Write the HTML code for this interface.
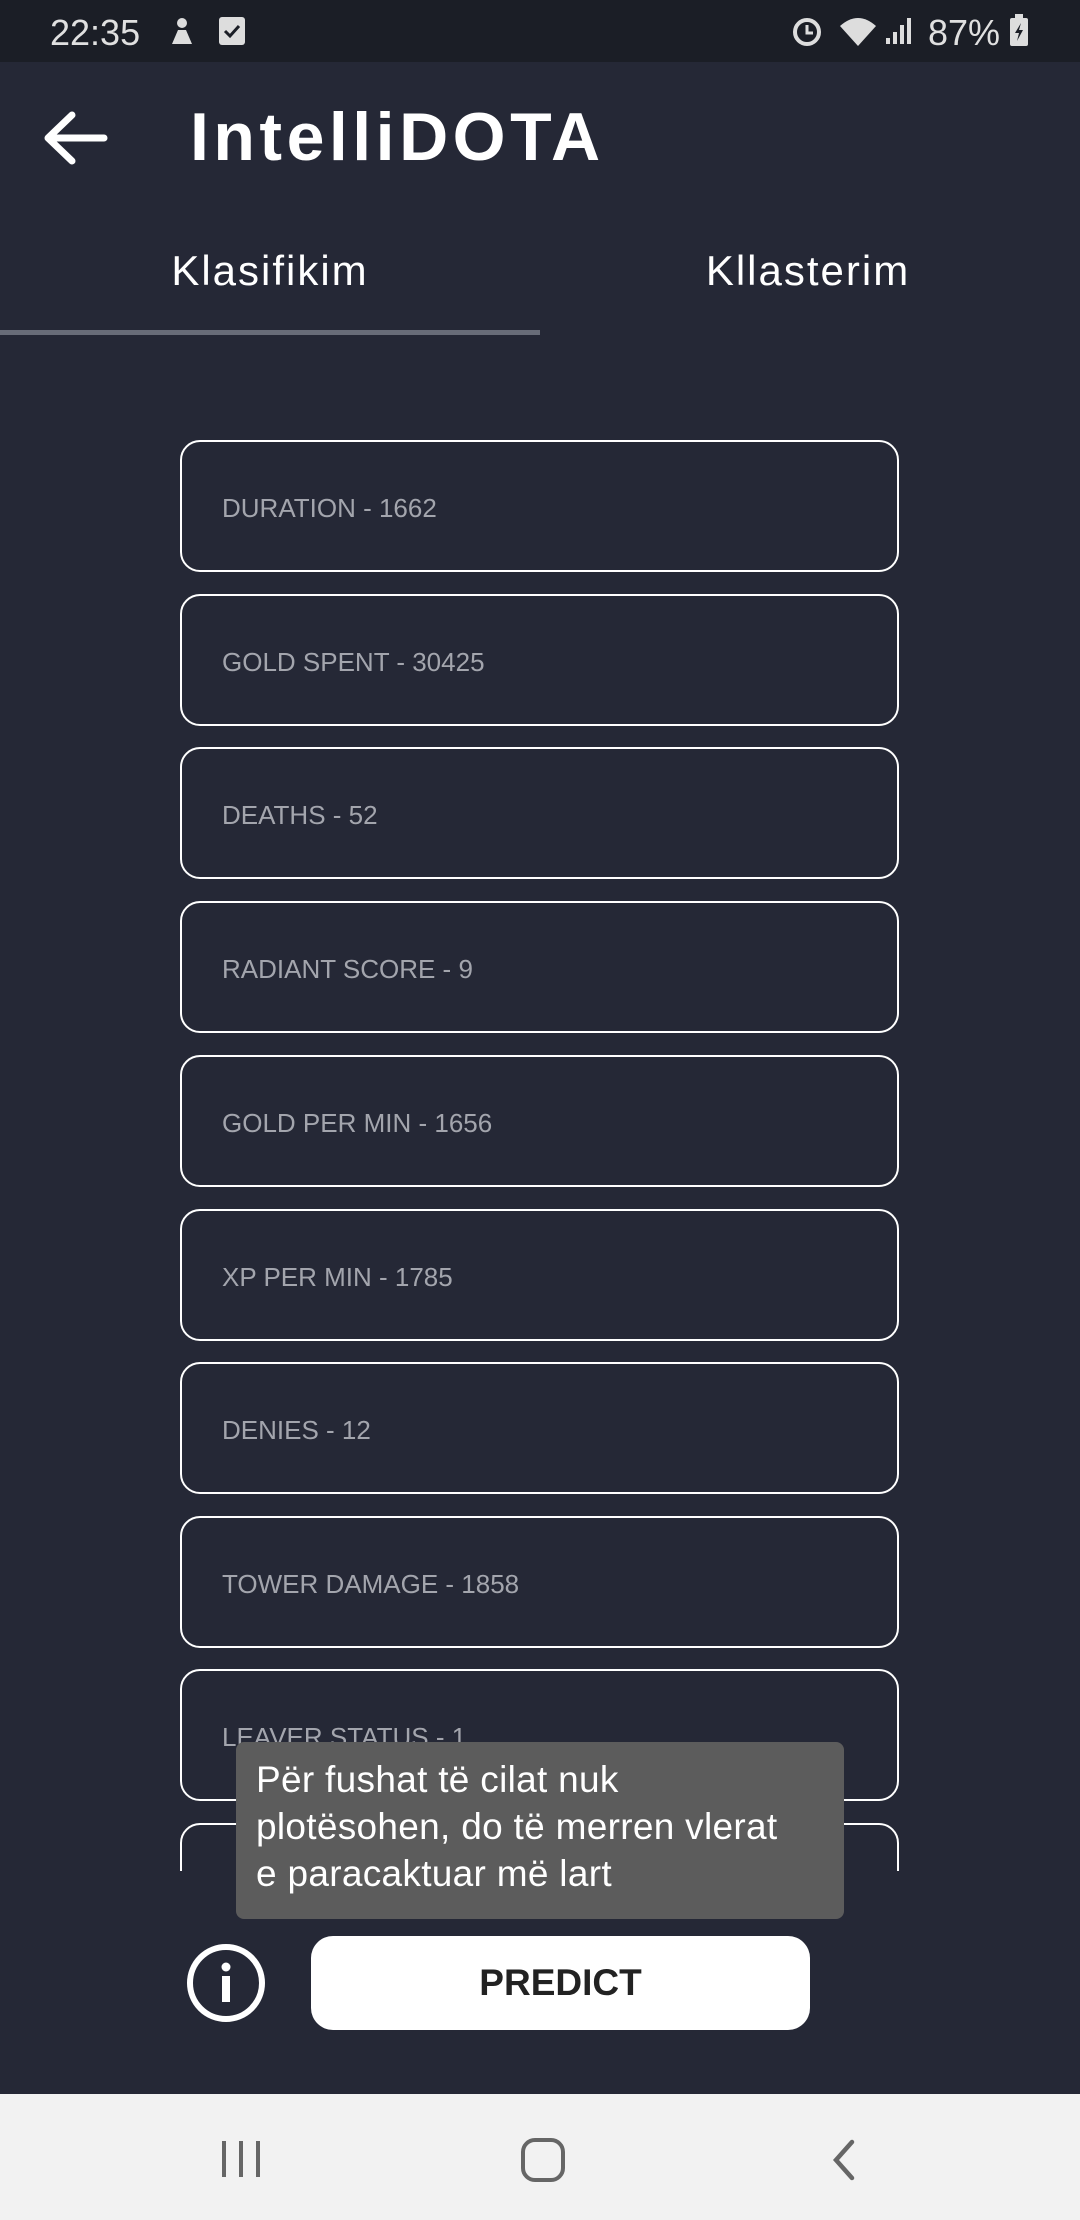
<!DOCTYPE html>
<html><head><meta charset="utf-8"><style>
*{margin:0;padding:0;box-sizing:border-box}
body{width:1080px;height:2220px;background:#252836;font-family:"Liberation Sans",sans-serif;position:relative;overflow:hidden}
.sb{position:absolute;left:0;top:0;width:1080px;height:62px;background:#1b1e26;color:#e0e0e0;font-size:36px}
.field{position:absolute;left:180px;width:719px;height:132px;border:2.5px solid #fff;border-radius:20px;color:#a3a5ad;font-size:26px;padding-left:40px;line-height:133px}
.clip{position:absolute;left:0;top:420px;width:1080px;height:1451px;overflow:hidden}
</style></head><body>
<div class="sb">
<span style="position:absolute;left:50px;top:12px">22:35</span>
<svg style="position:absolute;left:166px;top:16px" width="30" height="32" viewBox="0 0 30 32"><circle cx="16" cy="7" r="5" fill="#ddd"/><path d="M6 28 L12 14 L20 14 L26 28 Z" fill="#ddd"/></svg>
<svg style="position:absolute;left:218px;top:16px" width="28" height="30"><rect x="1" y="1" width="26" height="28" rx="3" fill="#ddd"/><path d="M7 15 L12 20 L21 10" stroke="#1b1e26" stroke-width="3" fill="none"/></svg>
<svg style="position:absolute;left:790px;top:14px" width="34" height="34"><circle cx="17" cy="18" r="12" fill="none" stroke="#ddd" stroke-width="4"/><path d="M17 11v8h6" stroke="#ddd" stroke-width="3" fill="none"/></svg>
<svg style="position:absolute;left:838px;top:14px" width="40" height="34"><path d="M2 12 Q20 -4 38 12 L20 32 Z" fill="#ddd"/></svg>
<svg style="position:absolute;left:884px;top:16px" width="30" height="30"><rect x="2" y="22" width="4" height="6" fill="#ddd"/><rect x="9" y="16" width="4" height="12" fill="#ddd"/><rect x="16" y="9" width="4" height="19" fill="#ddd"/><rect x="23" y="2" width="4" height="26" fill="#ddd"/></svg>
<span style="position:absolute;left:928px;top:12px">87%</span>
<svg style="position:absolute;left:1008px;top:14px" width="22" height="34"><rect x="2" y="4" width="18" height="28" rx="2" fill="#ddd"/><rect x="7" y="0" width="8" height="4" fill="#ddd"/><path d="M13 9 L7 19 L11 19 L9 27 L15 16 L11 16 Z" fill="#1b1e26"/></svg>
</div>
<svg style="position:absolute;left:42px;top:110px" width="66" height="56" viewBox="0 0 66 56"><path d="M62 28 H8 M30 5 L6 28 L30 51" stroke="#fff" stroke-width="7" fill="none" stroke-linecap="round" stroke-linejoin="round"/></svg>
<div style="position:absolute;left:190px;top:98px;font-size:68px;font-weight:bold;color:#fff;letter-spacing:4.5px">IntelliDOTA</div>
<div style="position:absolute;left:0;top:247px;width:540px;text-align:center;font-size:42px;color:#fff;letter-spacing:2px">Klasifikim</div>
<div style="position:absolute;left:540px;top:247px;width:536px;text-align:center;font-size:42px;color:#fff;letter-spacing:2px">Kllasterim</div>
<div style="position:absolute;left:0;top:330px;width:540px;height:5px;background:#686c78"></div>
<div class="clip">
<div class="field" style="top:20px">DURATION - 1662</div>
<div class="field" style="top:174px">GOLD SPENT - 30425</div>
<div class="field" style="top:327px">DEATHS - 52</div>
<div class="field" style="top:481px">RADIANT SCORE - 9</div>
<div class="field" style="top:635px">GOLD PER MIN - 1656</div>
<div class="field" style="top:789px">XP PER MIN - 1785</div>
<div class="field" style="top:942px">DENIES - 12</div>
<div class="field" style="top:1096px">TOWER DAMAGE - 1858</div>
<div class="field" style="top:1249px">LEAVER STATUS - 1</div>
<div class="field" style="top:1403px"></div>
</div>
<div style="position:absolute;left:236px;top:1742px;width:608px;height:177px;background:#5c5c5c;border-radius:8px;color:#fff;font-size:37px;line-height:47px;padding:14px 20px;white-space:nowrap;letter-spacing:0.3px">Për fushat të cilat nuk<br>plotësohen, do të merren vlerat<br>e paracaktuar më lart</div>
<svg style="position:absolute;left:186px;top:1943px" width="80" height="80"><circle cx="40" cy="40" r="36" fill="none" stroke="#fff" stroke-width="6"/><circle cx="40" cy="24" r="4.5" fill="#fff"/><rect x="36" y="33" width="8" height="26" fill="#fff"/></svg>
<div style="position:absolute;left:311px;top:1936px;width:499px;height:94px;background:#fff;border-radius:22px;text-align:center;line-height:94px;font-size:37px;color:#222;font-weight:bold">PREDICT</div>
<div style="position:absolute;left:0;top:2094px;width:1080px;height:126px;background:#f2f2f2"></div>
<svg style="position:absolute;left:218px;top:2139px" width="48" height="40"><rect x="4" y="2" width="4" height="36" fill="#666"/><rect x="21" y="2" width="4" height="36" fill="#666"/><rect x="38" y="2" width="4" height="36" fill="#666"/></svg>
<svg style="position:absolute;left:520px;top:2137px" width="46" height="46"><rect x="3" y="3" width="40" height="40" rx="12" fill="none" stroke="#666" stroke-width="4"/></svg>
<svg style="position:absolute;left:828px;top:2138px" width="30" height="44"><path d="M24 4 L8 22 L24 40" stroke="#666" stroke-width="4.5" fill="none" stroke-linecap="round"/></svg>
</body></html>
